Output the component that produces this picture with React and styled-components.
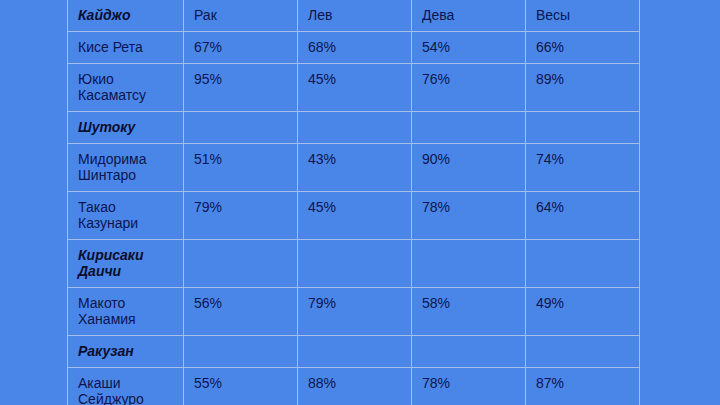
import React from "react";
import styled, { createGlobalStyle } from "styled-components";

const GlobalStyle = createGlobalStyle`
  html, body {
    margin: 0;
    padding: 0;
    background: #4a86e8;
    overflow: hidden;
  }
`;

const rows = [
  { group: "Кайджо", header: true },
  { name: "Кисе Рета", values: ["67%", "68%", "54%", "66%"] },
  { name: "Юкио Касаматсу", values: ["95%", "45%", "76%", "89%"] },
  { group: "Шутоку" },
  { name: "Мидорима Шинтаро", values: ["51%", "43%", "90%", "74%"] },
  { name: "Такао Казунари", values: ["79%", "45%", "78%", "64%"] },
  { group: "Кирисаки Даичи" },
  { name: "Макото Ханамия", values: ["56%", "79%", "58%", "49%"] },
  { group: "Ракузан" },
  { name: "Акаши Сейджуро", values: ["55%", "88%", "78%", "87%"] },
];

const signs = ["Рак", "Лев", "Дева", "Весы"];

const Page = styled.div`
  width: 720px;
  height: 405px;
  padding-left: 67px;
  box-sizing: border-box;
  background: #4a86e8;
  overflow: hidden;
`;

const Table = styled.table`
  width: 573px;
  margin-top: -1px;
  table-layout: fixed;
  border-collapse: collapse;
  font-family: "Liberation Sans", Arial, sans-serif;
  font-size: 14px;
  line-height: 16px;
  color: #0c1550;
`;

const Cell = styled.td`
  border: 1px solid #a7bde6;
  padding: 7px 10px 8px;
  vertical-align: top;
  text-align: left;
  font-weight: ${(p) => (p.$group ? 700 : 400)};
  font-style: ${(p) => (p.$group ? "italic" : "normal")};
  color: ${(p) => (p.$group ? "#0a0f30" : "#0c1550")};
  word-wrap: break-word;
`;

const NameCell = styled(Cell)`
  padding-right: 28px;
`;

export default function App() {
  return (
    <Page>
      <GlobalStyle />
      <Table>
        <colgroup>
          <col style={{ width: "116px" }} />
          <col />
          <col />
          <col />
          <col />
        </colgroup>
        <tbody>
          {rows.map((r, i) => (
            <tr key={i}>
              {r.group ? (
                <NameCell $group>{r.group}</NameCell>
              ) : (
                <NameCell>{r.name}</NameCell>
              )}
              {r.header
                ? signs.map((s) => <Cell key={s}>{s}</Cell>)
                : r.values
                ? r.values.map((v, j) => <Cell key={j}>{v}</Cell>)
                : [0, 1, 2, 3].map((j) => <Cell key={j} />)}
            </tr>
          ))}
        </tbody>
      </Table>
    </Page>
  );
}
